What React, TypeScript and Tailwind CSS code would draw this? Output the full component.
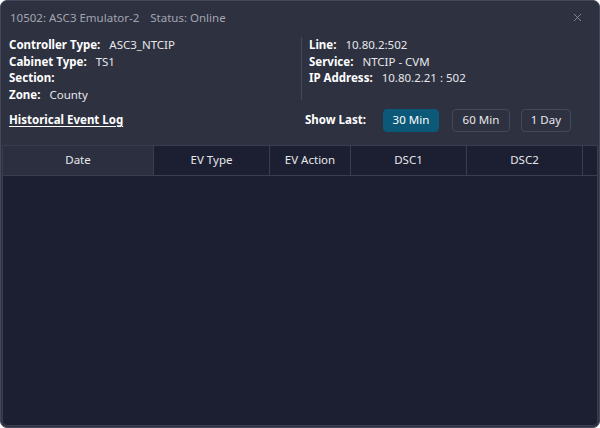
import { X } from "lucide-react";

const font = { fontFamily: '"Noto Sans", "Open Sans", sans-serif' };

function Field({ label, value }: { label: string; value?: string }) {
  return (
    <div className="flex h-[16.4px] items-center leading-none">
      <span className="font-bold text-white">{label}</span>
      {value && <span className="ml-[9px] text-[#e6e7eb]">{value}</span>}
    </div>
  );
}

export default function App() {
  const columns = [
    { label: "Date", w: "w-[151px]", active: true },
    { label: "EV Type", w: "w-[116px]" },
    { label: "EV Action", w: "w-[81px]" },
    { label: "DSC1", w: "w-[116px]" },
    { label: "DSC2", w: "w-[116px]" },
  ];

  return (
    <div
      className="w-[600px] h-[428px] bg-[#2e3140] border border-[#45485a] rounded-[7px] flex flex-col overflow-hidden text-[11.5px]"
      style={font}
    >
      {/* Title bar */}
      <div className="h-[34px] flex items-center justify-between pl-[9px] pr-[15px] shrink-0">
        <div className="text-[11.5px] text-[#a3a6b1] flex gap-[11px]">
          <span>10502: ASC3 Emulator-2</span>
          <span>Status: Online</span>
        </div>
        <X className="w-[13px] h-[13px] -mt-[1px] text-[#9a9da8]" strokeWidth={1.4} />
      </div>

      {/* Info */}
      <div className="flex px-[8px] pt-[2px] shrink-0">
        <div className="w-[292px] flex flex-col">
          <Field label="Controller Type:" value="ASC3_NTCIP" />
          <Field label="Cabinet Type:" value="TS1" />
          <Field label="Section:" />
          <Field label="Zone:" value="County" />
        </div>
        <div className="border-l border-[#45485a] pl-[7px] h-[63px] flex flex-col">
          <Field label="Line:" value="10.80.2:502" />
          <Field label="Service:" value="NTCIP - CVM" />
          <Field label="IP Address:" value="10.80.2.21 : 502" />
        </div>
      </div>

      {/* Log controls */}
      <div className="flex items-center px-[8px] mt-[5px] h-[24px] shrink-0">
        <div className="w-[296px] font-bold text-white underline underline-offset-2">Historical Event Log</div>
        <span className="font-bold text-white">Show Last:</span>
        <div className="flex ml-[17px] mt-[1px]">
          <button className="h-[23px] w-[56px] rounded-[4px] bg-[#0b5878] text-white border border-[#0b5878]">30 Min</button>
          <button className="ml-[13px] h-[23px] w-[58px] rounded-[4px] border border-[#45485a] text-[#e6e7eb]">60 Min</button>
          <button className="ml-[11px] h-[23px] w-[50px] rounded-[4px] border border-[#45485a] text-[#e6e7eb]">1 Day</button>
        </div>
      </div>

      {/* Table */}
      <div className="flex-1 mt-[13px] mx-[1px] mb-[1px] bg-[#1c1f31] border border-[#3a3d4e] rounded-b-[5px] flex flex-col">
        <div className="flex h-[30px] border-b border-[#3a3d4e] shrink-0">
          {columns.map((c) => (
            <div
              key={c.label}
              className={`${c.w} ${c.active ? "bg-[#2c2f3f]" : ""} border-r border-[#3a3d4e] flex items-center justify-center text-[#e6e7eb]`}
            >
              {c.label}
            </div>
          ))}
          <div className="flex-1" />
        </div>
        <div className="flex-1" />
      </div>
    </div>
  );
}
